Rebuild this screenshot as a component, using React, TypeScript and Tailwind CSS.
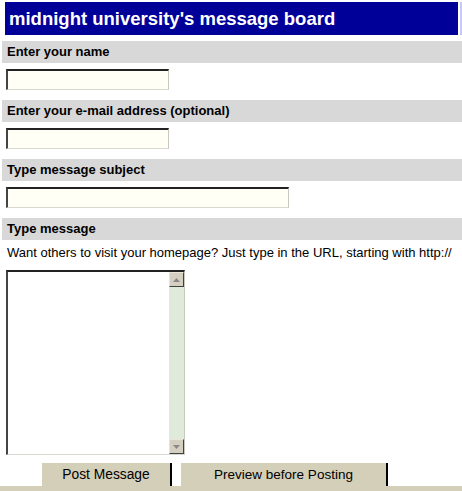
import React from "react";

function Label({ children }: { children: React.ReactNode }) {
  return (
    <div className="ml-[2px] h-[22px] bg-[#d8d8d8] pl-[5px] text-[13px] font-bold leading-[22px] text-black">
      {children}
    </div>
  );
}

function Field({ w }: { w: string }) {
  return (
    <div className="ml-[6px] mt-[6px] mb-[10px]">
      <div
        className={`${w} h-[21px] border-t-2 border-l-2 border-r border-b border-t-[#222] border-l-[#444] border-r-[#c8c8c0] border-b-[#d8d8d0] bg-[#fffff6]`}
      />
    </div>
  );
}

export default function App() {
  return (
    <div
      className="relative h-[491px] w-[462px] overflow-hidden bg-white"
      style={{ fontFamily: '"Liberation Sans", Arial, sans-serif' }}
    >
      <div className="flex pt-[2px]">
        <div className="ml-[5px] h-[33px] w-[454px] bg-[#000099] pl-[4px] text-[18.5px] font-bold leading-[33px] text-white">
          midnight university's message board
        </div>
        <div className="ml-[2px] h-[33px] w-[2px] bg-[#c8c8f0]" />
      </div>
      <div className="mt-[6px]">
        <Label>Enter your name</Label>
        <Field w="w-[163px]" />
        <Label>Enter your e-mail address (optional)</Label>
        <Field w="w-[163px]" />
        <Label>Type message subject</Label>
        <Field w="w-[283px]" />
        <Label>Type message</Label>
        <div className="mt-[5px] pl-[7px] text-[13px] leading-[15px] text-black">
          Want others to visit your homepage? Just type in the URL, starting with http://
        </div>
        <div className="ml-[6px] mt-[10px] flex h-[185px] w-[179px] border-t-2 border-l-2 border-r border-b border-t-[#222] border-l-[#444] border-r-[#c8c8c0] border-b-[#d8d8d0] bg-white">
          <div className="flex-1" />
          <div className="flex w-[15px] flex-col bg-[#dfeadb]">
            <div className="flex h-[15px] items-center justify-center border border-[#e8e4d8] border-r-[#404040] border-b-[#404040] bg-[#d4cfc0]">
              <svg width="7" height="4" viewBox="0 0 7 4">
                <path d="M0 4 L3.5 0 L7 4 Z" fill="#888" />
              </svg>
            </div>
            <div className="flex-1" />
            <div className="flex h-[15px] items-center justify-center border border-[#e8e4d8] border-r-[#404040] border-b-[#404040] bg-[#d4cfc0]">
              <svg width="7" height="4" viewBox="0 0 7 4">
                <path d="M0 0 L3.5 4 L7 0 Z" fill="#888" />
              </svg>
            </div>
          </div>
        </div>
        <div className="mt-[8px] flex">
          <div className="ml-[42px] h-[23px] w-[130px] border-r-2 border-black bg-[#d4cfb8] text-center text-[13.8px] leading-[24px] text-black">
            Post Message
          </div>
          <div className="ml-[9px] h-[23px] w-[207px] border-r-2 border-black bg-[#d4cfb8] text-center text-[13.5px] leading-[24px] text-black">
            Preview before Posting
          </div>
        </div>
        <div className="h-[6px] w-full bg-[#d4cfb8]" />
      </div>
    </div>
  );
}
